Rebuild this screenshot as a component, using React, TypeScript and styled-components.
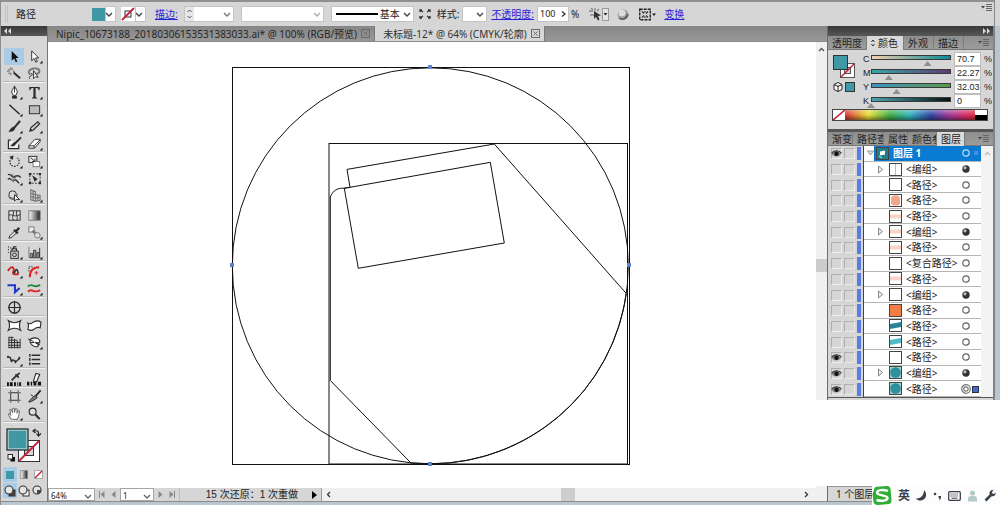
import React from 'react';
import styled, { createGlobalStyle, css } from 'styled-components';

const teal = '#3f98a3';
const cjk = '"Noto Sans", "Noto Sans CJK SC", sans-serif';
const narrow = '"Liberation Sans", "Noto Sans CJK SC", sans-serif';

const GlobalStyle = createGlobalStyle`
  * { box-sizing: border-box; }
  html, body { margin: 0; height: 100%; }
  body { font: 10px/14px ${cjk}; color: #222; background: #d6d6d6; overflow: hidden; }
  button, input, select { font: inherit; color: inherit; margin: 0; padding: 0; border: 0; background: none; border-radius: 0; outline: none; }
  svg { display: block; flex: none; }
`;

const Window = styled.div`
  position: relative;
  display: flex;
  flex-direction: column;
  height: 100vh;
  min-height: 500px;
  border-left: 1px solid #8c8c8c;
`;

/* ---------- options bar ---------- */
const OptionsBar = styled.header`
  display: flex;
  align-items: center;
  height: 26px;
  flex: none;
  margin-right: 5px;
  border-top: 2px solid #909090;
  border-right: 1px solid #8a8a8a;
  padding-left: 4px;
  background: #d6d6d6;
`;
const Grip = styled.span`
  width: 3px;
  height: 18px;
  border-left: 1px solid #c2c2c2;
  border-right: 1px solid #c2c2c2;
`;
const BarText = styled.span<{ $ml: number }>`
  margin-left: ${p => p.$ml}px;
  white-space: nowrap;
  flex: none;
`;
const BarLink = styled.a<{ $ml: number }>`
  margin-left: ${p => p.$ml}px;
  color: #2a22d8;
  text-decoration: underline;
  white-space: nowrap;
  flex: none;
`;
const Chip = styled.span<{ $ml: number; $color: string }>`
  width: 13px;
  height: 13px;
  flex: none;
  margin-left: ${p => p.$ml}px;
  background: ${p => p.$color};
`;
const Field = styled.span<{ $ml: number; $w: number }>`
  position: relative;
  display: flex;
  align-items: center;
  flex: none;
  width: ${p => p.$w}px;
  height: 16px;
  margin-left: ${p => p.$ml}px;
  background: #fff;
  border: 1px solid #c3c3c3;
`;
const FieldSelect = styled.select`
  appearance: none;
  width: 100%;
  height: 14px;
  line-height: 14px;
`;
const Arrow = styled.svg`
  position: absolute;
  right: 2px;
  top: 4px;
  pointer-events: none;
`;
const Spinner = styled.span`
  display: flex;
  width: 9px;
  height: 14px;
  flex: none;
  align-items: center;
  justify-content: center;
  background: #e6e6e6;
`;
const FieldInput = styled.input`
  width: 100%;
  min-width: 0;
  height: 14px;
  padding-left: 2px;
  font-size: 9px;
`;
const IconButton = styled.button<{ $ml: number }>`
  flex: none;
  margin-left: ${p => p.$ml}px;
  display: flex;
  align-items: center;
`;
const BarMenu = styled.button`
  margin-left: auto;
  align-self: flex-start;
  padding: 1px 1px 0 0;
`;

/* ---------- main areas ---------- */
const Body = styled.div`
  display: flex;
  flex: 1;
  min-height: 0;
  padding-bottom: 3px;
  background: #b9c6cf;
`;
const DarkHead = styled.div<{ $end?: boolean }>`
  display: flex;
  align-items: center;
  justify-content: ${p => (p.$end ? 'flex-end' : 'flex-start')};
  height: 10px;
  flex: none;
  padding: 0 3px;
  background: linear-gradient(#383838, #585858);
`;
const ToolColumn = styled.aside`
  display: flex;
  flex-direction: column;
  width: 47px;
  flex: none;
  background: #d6d6d6;
  border-right: 1px solid #777;
  border-bottom: 1px solid #8c8c8c;
`;
const ToolHandle = styled.div`
  height: 12px;
  flex: none;
`;
const ToolSection = styled.div<{ $pad: number }>`
  display: grid;
  grid-template-columns: 20px 20px;
  margin: 0 2px;
  padding: ${p => p.$pad}px 0 0 1px;
  border-bottom: 1px solid #f2f2f2;
  box-shadow: 0 -1px 0 #b9b9b9 inset;
`;
const ToolButton = styled.button<{ $on?: boolean }>`
  display: flex;
  align-items: center;
  justify-content: center;
  height: 17px;
  ${p => p.$on && css`background: #a9cbe6;`}
`;
const PaintArea = styled.div`
  padding: 5px 0 0 5px;
  height: 44px;
`;
const ModeRow = styled.div`
  display: flex;
  height: 16px;
  padding-left: 2px;
`;
const ModeButton = styled.button<{ $on?: boolean }>`
  display: flex;
  align-items: center;
  justify-content: center;
  width: 14px;
  height: 15px;
  background: ${p => (p.$on ? '#a9cbe6' : 'transparent')};
`;

const Center = styled.main`
  display: flex;
  flex-direction: column;
  flex: 1;
  min-width: 0;
  background: #fff;
`;
const TabBar = styled.nav`
  display: flex;
  height: 16px;
  flex: none;
  background: linear-gradient(#868686, #989898);
  border-bottom: 1px solid #8a8a8a;
`;
const DocTab = styled.div<{ $on?: boolean }>`
  display: flex;
  align-items: center;
  gap: 4px;
  height: 15px;
  padding: 0 4px 0 8px;
  background: ${p => (p.$on ? '#d6d6d6' : 'transparent')};
  border-right: 1px solid #787878;
  color: ${p => (p.$on ? '#333' : '#262626')};
`;
const DocName = styled.button`
  white-space: nowrap;
  text-align: left;
`;
const View = styled.div`
  display: flex;
  flex: 1;
  min-height: 0;
`;
const Artboard = styled.section`
  display: flex;
  flex: 1;
  min-width: 0;
  align-items: center;
  justify-content: center;
  overflow: hidden;
  background: #fff;
`;
const VScroll = styled.div`
  display: flex;
  flex-direction: column;
  align-items: center;
  width: 11px;
  flex: none;
  padding-top: 5px;
  background: #f0f0f0;
`;
const VThumb = styled.span`
  width: 11px;
  height: 13px;
  margin-top: 207px;
  background: #cdcdcd;
`;
const StatusBar = styled.footer`
  display: flex;
  height: 14px;
  flex: none;
  background: #d6d6d6;
  border-bottom: 1px solid #8c8c8c;
  font-size: 9px;
  line-height: 13px;
`;
const ZoomField = styled.span`
  position: relative;
  width: 47px;
  height: 13px;
  background: #fff;
  border: 1px solid #a5a5a5;
`;
const StatusSelect = styled.select`
  appearance: none;
  width: 100%;
  height: 11px;
  padding-left: 2px;
  font-size: 8px;
  line-height: 11px;
`;
const PageNav = styled.span`
  display: flex;
  align-items: center;
  justify-content: space-around;
  width: 25px;
`;
const PageField = styled(ZoomField)`
  width: 34px;
`;
const History = styled.span`
  display: flex;
  align-items: center;
  justify-content: flex-end;
  gap: 14px;
  width: 142px;
  padding-right: 4px;
  border-left: 1px solid #bdbdbd;
  font-family: ${narrow};
  font-size: 10px;
  white-space: nowrap;
`;
const HScroll = styled.div`
  display: flex;
  flex: 1;
  align-items: center;
  justify-content: space-between;
  padding: 0 18px 0 4px;
  background: #f0f0f0;
  border-left: 1px solid #999;
`;
const HThumb = styled.span`
  width: 14px;
  height: 13px;
  background: #cdcdcd;
`;

/* ---------- panels ---------- */
const PanelColumn = styled.aside`
  display: flex;
  flex-direction: column;
  width: 168px;
  flex: none;
  margin-right: 5px;
  background: #d6d6d6;
  border-left: 1px solid #6c6c6c;
  border-right: 2px solid #7f8487;
  border-bottom: 1px solid #8c8c8c;
`;
const PanelTabs = styled.div`
  display: flex;
  height: 14px;
  flex: none;
  background: linear-gradient(#8e8e8e, #9c9c9c);
  border-bottom: 1px solid #777;
`;
const PanelTab = styled.button<{ $w: number; $on?: boolean }>`
  display: flex;
  align-items: center;
  gap: 3px;
  width: ${p => p.$w}px;
  height: 14px;
  padding-left: 4px;
  overflow: hidden;
  white-space: nowrap;
  background: ${p => (p.$on ? '#dadada' : 'transparent')};
  border-right: 1px solid #7c7c7c;
`;
const PanelMenu = styled.button`
  margin-left: auto;
  padding-right: 3px;
`;
const ColorBody = styled.div`
  display: flex;
  gap: 7px;
  height: 59px;
  padding: 2px 3px 0 4px;
`;
const ChannelList = styled.div`
  display: flex;
  flex: 1;
  flex-direction: column;
`;
const Channel = styled.label`
  display: flex;
  align-items: center;
  height: 14px;
  font-family: ${narrow};
  font-size: 9px;
`;
const ChannelName = styled.span`
  width: 8px;
`;
const Track = styled.span<{ $from: string; $to: string }>`
  width: 80px;
  height: 5px;
  margin-bottom: 3px;
  background: linear-gradient(90deg, ${p => p.$from}, ${p => p.$to});
  border: 1px solid #3a3a3a;
`;
const Slider = styled.input`
  display: block;
  appearance: none;
  width: 88px;
  height: 9px;
  margin: 0 -5px;
  &::-webkit-slider-thumb {
    appearance: none;
    width: 8px;
    height: 5px;
    margin-top: 6px;
    background: #8f8f8f;
    clip-path: polygon(50% 0, 100% 100%, 0 100%);
  }
`;
const Amount = styled.input`
  width: 27px;
  height: 14px;
  margin: 0 3px 0 3px;
  padding-left: 2px;
  background: #fff;
  border: 1px solid #bdbdbd;
`;
const Spectrum = styled.div`
  display: flex;
  height: 12px;
  margin: 0 5px 0 4px;
  border: 1px solid #444;
  flex: none;
`;
const Hues = styled.span`
  flex: 1;
  background:
    linear-gradient(rgba(255, 255, 255, .35), transparent 50%, rgba(0, 0, 0, .45)),
    linear-gradient(90deg, #d8343c, #e8e03a 18%, #3fae49 35%, #35b5c0 50%, #3448a8 66%, #a03a9a 80%, #dc2f6a 93%, #d83040);
`;
const Ends = styled.span`
  width: 12px;
  background: linear-gradient(#fff 50%, #000 50%);
`;
const PanelGap = styled.div`
  height: 11px;
  flex: none;
  border-bottom: 3px solid #555;
`;
const LayerArea = styled.div`
  display: flex;
  height: 252px;
  flex: none;
  border-bottom: 1px solid #555;
`;
const LayerList = styled.ul`
  display: grid;
  grid-auto-rows: 1fr;
  flex: 1;
  margin: 0;
  padding: 0;
  list-style: none;
`;
const LayerRow = styled.li`
  display: flex;
  min-height: 0;
`;
const Flags = styled.span`
  display: flex;
  align-items: center;
  gap: 2px;
  width: 36px;
  padding-left: 3px;
  border-right: 1px solid #444;
`;
const Flag = styled.button`
  display: flex;
  align-items: center;
  justify-content: center;
  width: 11px;
  height: 11px;
  border: 1px solid;
  border-color: #b0b0b0 #ececec #ececec #b0b0b0;
`;
const Stripe = styled.span`
  width: 4px;
  height: 13px;
  background: #5b7be6;
`;
const Entry = styled.span<{ $top?: boolean }>`
  display: flex;
  align-items: center;
  flex: 1;
  padding-left: ${p => (p.$top ? 12 : 13)}px;
  border-bottom: 1px solid #b5b5b5;
  background: ${p => (p.$top ? 'linear-gradient(90deg, #fff 10px, #0a7bd3 10px)' : '#fff')};
  color: ${p => (p.$top ? '#fff' : '#222')};
  font-weight: ${p => (p.$top ? 700 : 400)};
`;
const Twist = styled.span`
  width: 12px;
  flex: none;
`;
const TopTwist = styled.span`
  width: 12px;
  margin-left: -12px;
  padding-left: 3px;
  flex: none;
`;
const Label = styled.span`
  flex: 1;
  margin-left: 4px;
  white-space: nowrap;
`;
const Target = styled.button`
  display: flex;
  align-items: center;
  width: 20px;
  height: 12px;
  flex: none;
`;
const LayerScroll = styled.span`
  display: flex;
  justify-content: center;
  width: 12px;
  padding-top: 5px;
  background: #f3f3f3;
`;
const PanelFooter = styled.div`
  margin-top: auto;
  height: 15px;
  flex: none;
  padding-left: 8px;
  border-top: 1px solid #999;
`;

/* ---------- overlays ---------- */
const Blank = styled.div`
  position: absolute;
  right: 0;
  bottom: 19px;
  width: 185px;
  height: 86px;
  background: #fff;
`;
const ImeBar = styled.div`
  position: absolute;
  right: 0;
  bottom: 0;
  display: flex;
  align-items: center;
  justify-content: space-between;
  width: 128px;
  height: 19px;
  padding-right: 4px;
  background: #fdfdfd;
  color: #3a3f4c;
`;
const ImeButton = styled.button`
  font-size: 12px;
  font-weight: 700;
  line-height: 16px;
`;

/* ---------- small drawings ---------- */
const Chevron = ({ color = '#444' }: { color?: string }) => (
  <Arrow width="8" height="7" viewBox="0 0 8 7" fill="none" stroke={color} strokeWidth="1.4"><path d="M1 2l3 3 3-3" /></Arrow>
);
const MenuGlyph = () => (
  <svg width="12" height="9" viewBox="0 0 12 9"><path d="M0 3h4L2 5.500z" fill="#444" /><path d="M5 1.500h6M5 3.500h6M5 5.500h6M5 7.500h6" stroke="#666" strokeWidth="1" /></svg>
);
const CloseGlyph = () => (
  <svg width="9" height="9" viewBox="0 0 9 9" fill="none" stroke="#6a6a6a"><rect x=".5" y=".5" width="8" height="8" /><path d="M2.500 2.500l4 4M6.500 2.500l-4 4" /></svg>
);
const NoneSwatch = ({ size = 14 }: { size?: number }) => (
  <svg width={size} height={size} viewBox="0 0 14 14"><rect width="14" height="14" fill="#fff" /><rect x="4" y="4" width="6" height="6" fill="none" stroke="#333" /><path d="M1 13L13 1" stroke="#c4203a" strokeWidth="1.800" /></svg>
);
const Eye = () => (
  <svg width="11" height="9" viewBox="0 0 11 9"><path d="M.5 5C2.500 1.500 8 1 10.500 4.500 8.500 8 3 8.500.5 5z" fill="#888" /><path d="M.5 4.500C2.500 1 8 .8 10.500 4" stroke="#333" fill="none" strokeWidth="1.200" /><circle cx="5.500" cy="4.800" r="2.200" fill="#111" /></svg>
);
const Dot = ({ full, ring }: { full?: boolean; ring?: boolean }) => (
  <svg width="10" height="10" viewBox="0 0 10 10">
    {full ? (<><circle cx="5" cy="5" r="3.700" fill="#333" /><circle cx="4" cy="3.800" r="1.600" fill="#bbb" /></>)
      : ring ? (<><circle cx="5" cy="5" r="4.300" fill="none" stroke="#777" strokeWidth="1.200" /><circle cx="5" cy="5" r="2.200" fill="#fff" stroke="#777" strokeWidth="1.200" /></>)
        : (<circle cx="5" cy="5" r="3.200" fill="none" stroke="#666" strokeWidth="1.200" />)}
  </svg>
);

const k = '#2b2b2b';
const g = '#777';
const icons: Record<string, React.ReactNode> = {
  select: <path d="M6 2v10.500l2.600-2.400 1.800 4 1.600-.7-1.800-3.900h3.300z" fill="#111" />,
  direct: <path d="M6 2v10.500l2.600-2.400 1.800 4 1.600-.7-1.800-3.900h3.300z" fill="#fff" stroke={k} />,
  wand: <><path d="M8 7l7 6" stroke={k} strokeWidth="2" /><path d="M5 1v3M5 7v3M1 5.500h3M7 5.500h2M2.500 3l1.500 1.300M7 2.500L6 4M2.500 8.500L4 7" stroke={g} strokeWidth="1.200" /></>,
  lasso: <><path d="M5 9C1 7 3 3 9 2.500c6-.3 7 4.500 2.500 6L7 9" stroke={g} strokeWidth="2" /><path d="M5 8c2 0 2 2 0 2.500S3 13 4.500 14M8 5v8.500l2-2 3 .5z" stroke={k} fill="#fff" /></>,
  pen: <><path d="M9 1c1 3 3 4 3 6.500L10.500 11h-3L6 7.500C6 5 8 4 9 1z" fill="#fff" stroke={k} /><path d="M9 2v6" stroke={k} /><rect x="6.500" y="11.500" width="5" height="3" fill={k} /></>,
  type: <path d="M3.500 2h11v3.500h-1C13 3.800 12.500 3.300 10.200 3.300v9c0 .9.400 1.100 1.600 1.200v.8H6.200v-.8c1.200-.1 1.600-.3 1.600-1.200v-9C5.500 3.300 5 3.800 4.500 5.500h-1z" fill={k} />,
  line: <path d="M3.500 3l11 10" stroke={k} strokeWidth="1.600" />,
  rect: <rect x="3.500" y="4" width="11" height="8.500" fill="#bbb" stroke={k} />,
  brush: <><path d="M15 2L9 9" stroke={k} strokeWidth="2.200" /><path d="M8.500 8c2 1 1.500 3-.5 4.500-1.500 1-4 1.300-5.500 1C4 12.500 5 9 8.500 8z" fill={k} /></>,
  pencil: <><path d="M4 13l1-3.500L12.500 3l2 2L7.500 12z" fill="#ccc" stroke={k} strokeWidth="1.200" /><path d="M4 13l3-1-2-2z" fill={k} /></>,
  blob: <><path d="M5 4.500H2.500v9h11V9" fill="#eee" stroke={k} strokeWidth="1.300" /><path d="M16 1.500L9.500 8" stroke={k} strokeWidth="2" /><path d="M9.500 6.500c2 1 1 3-.5 3.800-1.500.7-3.500.7-4.500.4C6 10 7 7 9.500 6.500z" fill={k} /></>,
  eraser: <><path d="M3 10.500L9.500 3.500h5.500v2.500L9 13H3z" fill="#fff" stroke={k} /><path d="M3 10.500h5.500L15 4M8.500 10.500V13" stroke={k} /></>,
  rotate: <><path d="M6 4.200a5 5 0 1 0 6 0" stroke={k} strokeWidth="1.300" strokeDasharray="1.600 1.300" /><path d="M8 1.500L3.500 3l3.500 3.500z" fill={k} /></>,
  scale: <><rect x="3" y="2.500" width="8.500" height="6.500" fill="#eee" stroke={k} /><rect x="7.500" y="8" width="7" height="5.500" fill="#fff" stroke={g} /><path d="M5 4l4.500 4M9.500 5v3h-3" stroke={k} /></>,
  warp: <><path d="M2 4c3-2 4 3 6 2.500S13 3 15.500 7M2 9c2-3 5 3 7 1s3 2 5 3" stroke={k} strokeWidth="1.500" /><path d="M7 3l1 8M11 5l-3 6M4 7l4 5" stroke={g} /></>,
  free: <><rect x="4" y="3" width="11" height="10" stroke={k} strokeDasharray="2 1.500" /><path d="M3 2h2.500v2.500H3zM13.500 2H16v2.500h-2.500zM3 11.500h2.500V14H3zM13.500 11.500H16V14h-2.500zM6.500 4.500l6 4-3.500 3z" fill={k} /></>,
  shape: <><circle cx="7" cy="7" r="4" fill="#ddd" stroke={k} /><path d="M3 8c0 4 5 5 8 3l1-5" stroke={g} strokeWidth="1.400" /><path d="M9 7v7l2-2 3.500.5z" fill="#fff" stroke={k} /></>,
  persp: <><path d="M5 2l5 2v10l-5-1.500zM10 7l5 1v5l-5 1M5 5.500l5 1.500M5 9l5 1.500M7.500 3v10M10 10.500l5-.5M12.500 7.500v6" fill="none" stroke={g} strokeWidth="1.200" /></>,
  mesh: <><rect x="3" y="3" width="12" height="10" fill="#ddd" stroke={k} /><path d="M3 8c3-3 4 3 12-1M7 3c3 3-2 6 1 10M11.500 3c-2 4 2 6 0 10" stroke={k} /></>,
  gradient: <><defs><linearGradient id="gt"><stop offset="0" stopColor="#fff" /><stop offset="1" stopColor="#222" /></linearGradient></defs><rect x="3" y="3" width="12" height="10" fill="url(#gt)" stroke={g} /></>,
  dropper: <><path d="M3 14l1-2.500L9.500 6l2 2L6 13.500z" fill="#ddd" stroke={k} /><path d="M8.500 5l4 4M11 6.500L14 3" stroke={k} strokeWidth="2.400" /></>,
  blend: <><rect x="3" y="2" width="5.500" height="5.500" fill="#eee" stroke={g} /><path d="M7 6l4 4" stroke={g} strokeWidth="3" /><circle cx="12" cy="11" r="3" fill="#ddd" stroke={g} /></>,
  spray: <><rect x="5" y="6.500" width="8" height="8" fill="#ccc" stroke={k} /><path d="M6.500 6.500V4h4.500v2.500M8 4V2h3M2 2h1M4.500 3h1M2 5h1M2 8h1" stroke={k} strokeWidth="1.300" /><circle cx="9" cy="10.500" r="2" stroke={k} /></>,
  graph: <><path d="M3 2v11.500h13" stroke={g} /><path d="M4.500 9h2.500v4.500H4.500zM8 5.500h2.500v8H8zM11.500 8H14v5.500h-2.500z" fill="#999" stroke={k} strokeWidth=".8" /><path d="M14.500 3v10" stroke={k} /></>,
  reform: <><path d="M2 7.500c2-4 4.500-5 6-3 1 1.500-1 4-.5 5.500s4 1.500 6 0" stroke="#c22" strokeWidth="2" /><path d="M9 10c0-3 2-5 3-3.500l1 3.500" stroke={k} strokeWidth="1.600" /></>,
  corner: <><path d="M4 14C4 7 7 3.500 14 3.500" stroke="#d22" strokeWidth="2" /><path d="M3 8V3h5" stroke={k} strokeDasharray="1.500 1" /><path d="M11 7.500v4M9 9.500h4" stroke="#d22" /></>,
  zig: <path d="M1.500 4.500H9.500v7.500L14.500 7.500" stroke="#2036c8" strokeWidth="2.200" />,
  waves: <><path d="M2 6c4-5 7 3 13-2" stroke="#1f8a3a" strokeWidth="2" /><path d="M2 11.500c4-5 7 3 13-2" stroke="#d22" strokeWidth="2" /></>,
  target: <><circle cx="9" cy="8" r="6" stroke={k} strokeWidth="1.400" /><path d="M9 1v14M2 8h14" stroke={k} strokeWidth="1.300" /></>,
  bow: <path d="M2.500 3c4 2.500 9 2.500 13 0-1.500 3-1.500 7 0 10-4-2.500-9-2.500-13 0 1.500-3 1.500-7 0-10z" fill="#fff" stroke={k} strokeWidth="1.200" />,
  flag: <path d="M2 5.500c3 2 4.500-.5 6.500-1.500s5-1.500 7.500.5L15 10.500c-3-1.500-4.500 0-6.500 1.500S4 13.500 2 12c1-2 1-4 0-6.500z" fill="#fff" stroke={k} strokeWidth="1.200" />,
  grid: <><path d="M3 2v12M6 2v12M9 4v10M12 6v8M15 4v10M3 2.500h5M3 5.500h9M3 8h12M3 11h12M3 13.500h12" stroke={k} /></>,
  liquify: <><path d="M4 5c3-3 9-2 10 0 2 3-1 4-3 3-2-1 0 2 3 2l-2 2.500C8 13 4 10 4 5z" fill="#fff" stroke={k} strokeWidth="1.200" /><path d="M2 4l6 3M5 8h4" stroke={k} /></>,
  crystal: <><path d="M1.500 5l3 1 1 3.500 2.500-1 2 2 2-1.500 3-3" stroke={k} strokeWidth="1.500" /><path d="M2 4v2.500M6 8v3M10 9v3M14 5v3" stroke={k} strokeWidth="1.500" /></>,
  width: <path d="M6 3.500h9M6 8h9M6 12.500h9M4 2v3M4 6.500v3M4 11v3" stroke={k} strokeWidth="1.500" />,
  pick: <><path d="M6 10l5-5M10 3.500l3.500 3.500M12 4.500L14.500 2" stroke={k} strokeWidth="1.800" /><path d="M1 14h2M4 14h3M8.500 14h2M12 14h1M14 14h2" stroke="#111" strokeWidth="4" /></>,
  ink: <><path d="M8 10.500L10.500 2.500l4 1-3 7.500-3.500 1z" fill="#fff" stroke={k} strokeWidth="1.200" /><path d="M1 13.500h2.500M5 13.500h1.500M8 13.500h3M12.500 13.500H16" stroke="#111" strokeWidth="4" /></>,
  artboard: <><rect x="5" y="4" width="8" height="8" stroke={k} /><path d="M5 1.500V3M13 1.500V3M2.500 4H4M14 4h1.500M2.500 12H4M14 12h1.500M5 13v1.500M13 13v1.500" stroke={k} /></>,
  slice: <><path d="M15.500 1.500L9 9" stroke={k} strokeWidth="2" /><path d="M3 14c0-2 5-6 7-7l2 2c-1 1-6 5-9 5z" fill={g} stroke={k} /><path d="M5 6l3 2" stroke={k} /></>,
  hand: <path d="M5.500 14C4 12 2.500 9.500 2.500 8.500c1-1 2 .5 2.500 1L4 4c1-1 1.700 0 2 .8L7 7.500V3c1-1 1.700-.6 2 0v4l1-4c1-.7 1.700 0 1.700.8L11.500 8l1.500-3c1-.2 1.500.4 1.300 1.200L13 12l-1 2.500z" fill="#fff" stroke={g} strokeWidth="1.100" />,
  zoom: <><circle cx="7" cy="6" r="3.700" fill="#ddd" stroke={k} strokeWidth="1.200" /><path d="M10 9l4.500 5" stroke={k} strokeWidth="2.200" /></>,
};
const Tool = ({ name, on }: { name: string; on?: boolean }) => {
  const fly = !['select', 'wand', 'lasso', 'blob', 'free', 'mesh', 'gradient', 'dropper', 'target', 'bow', 'flag', 'grid', 'width', 'pick', 'ink', 'artboard', 'zoom'].includes(name);
  return (
    <ToolButton $on={on} aria-label={name}>
      <svg width="17" height="15" viewBox="0 0 18 16" fill="none">{icons[name]}{fly && <path d="M17.500 12.500v3h-3z" fill="#111" />}</svg>
    </ToolButton>
  );
};

const toolSections: { pad: number; tools: string[] }[] = [
  { pad: 0, tools: ['select', 'direct', 'wand', 'lasso'] },
  { pad: 1, tools: ['pen', 'type', 'line', 'rect', 'brush', 'pencil', 'blob', 'eraser'] },
  { pad: 0, tools: ['rotate', 'scale', 'warp', 'free', 'shape', 'persp'] },
  { pad: 2, tools: ['mesh', 'gradient', 'dropper', 'blend'] },
  { pad: 2, tools: ['spray', 'graph'] },
  { pad: 1, tools: ['reform', 'corner', 'zig', 'waves'] },
  { pad: 1, tools: ['target'] },
  { pad: 0, tools: ['bow', 'flag', 'grid', 'liquify', 'crystal', 'width'] },
  { pad: 1, tools: ['pick', 'ink'] },
  { pad: 0, tools: ['artboard', 'slice', 'hand', 'zoom'] },
];

const channels = [
  { name: 'C', value: 70.7, from: '#f3d0ae', to: '#0a8a96' },
  { name: 'M', value: 22.27, from: '#35a8a8', to: '#5d3b72' },
  { name: 'Y', value: 32.03, from: '#3d93c0', to: '#5a9a4c' },
  { name: 'K', value: 0, from: '#4aa5ad', to: '#061014' },
];

type Art = 'blank' | 'line' | 'pink' | 'band' | 'orange' | 'steel' | 'aqua' | 'disc' | 'top';
const Thumb = ({ art }: { art: Art }) => (
  <svg width="13" height="13" viewBox="0 0 13 13">
    <rect x=".5" y=".5" width="12" height="12" fill="#fff" stroke="#444" />
    {art === 'line' && <path d="M6.500 1v11" stroke="#eca995" />}
    {art === 'pink' && <path d="M2 3.500L4 1.500h5l2 2v6l-2 2H4l-2-2z" fill="#f4a68c" />}
    {art === 'band' && <path d="M1 4.500h11v4H1z" fill="#f9d3c6" />}
    {art === 'orange' && <path d="M1 1h11v11H1z" fill="#f47c45" />}
    {art === 'steel' && <path d="M1 5l11-2v5L1 10z" fill="#2d8199" />}
    {art === 'aqua' && <path d="M1 5l11-2v5L1 10z" fill="#4fbcc8" />}
    {art === 'disc' && <><rect x="1" y="1" width="11" height="11" fill="#9fcdd2" /><circle cx="6.500" cy="6.500" r="5.300" fill="#2c9199" /></>}
    {art === 'top' && <><rect x="1" y="1" width="11" height="11" fill="#1d7f8c" /><path d="M4 4.500l5-1v4l-5 1z" fill="#fff" /><path d="M3 9l3 2" stroke="#9fe" /></>}
  </svg>
);

const layers: { label: string; art: Art; group?: boolean; eye?: boolean; picked?: boolean }[] = [
  { label: '<编组>', art: 'line', group: true },
  { label: '<路径>', art: 'blank' },
  { label: '<路径>', art: 'pink' },
  { label: '<路径>', art: 'band' },
  { label: '<编组>', art: 'band', group: true },
  { label: '<路径>', art: 'band' },
  { label: '<复合路径>', art: 'blank' },
  { label: '<路径>', art: 'band' },
  { label: '<编组>', art: 'blank', group: true },
  { label: '<路径>', art: 'orange' },
  { label: '<路径>', art: 'steel' },
  { label: '<路径>', art: 'aqua' },
  { label: '<路径>', art: 'blank', eye: true },
  { label: '<编组>', art: 'disc', group: true, eye: true },
  { label: '<路径>', art: 'disc', eye: true, picked: true },
];

const LayerFlags = ({ eye }: { eye?: boolean }) => (
  <Flags>
    <Flag aria-label="可视性">{eye && <Eye />}</Flag>
    <Flag aria-label="锁定" />
    <Stripe />
  </Flags>
);

const Nav = ({ d }: { d: string }) => (
  <button aria-label="翻页"><svg width="7" height="7" viewBox="0 0 7 7"><path d={d} fill="#888" /></svg></button>
);

const Drawing = () => (
  <svg width="401" height="400" viewBox="232 65 401 400" overflow="visible" fill="none" stroke="#111" strokeWidth="1">
    <rect x="232.500" y="67.500" width="397" height="397" />
    <rect x="329" y="143.500" width="298.500" height="320.500" />
    <circle cx="430.300" cy="265.800" r="198" />
    <path d="M494.300 144L626.300 293.500A198 198 0 0 1 430.300 463.800L411 463L330.300 380.500V197C333 190 338 188 344 188.200L350 187.300L347 169.400Z" />
    <path d="M344.300 188.300L490.300 162.300L504.300 243L358.300 268.300Z" />
    <g fill="#5b83d0" stroke="none">
      <rect x="428" y="65" width="4" height="4" /><rect x="230" y="263" width="4" height="4" />
      <rect x="627" y="263" width="4" height="4" /><rect x="428" y="462" width="4" height="4" />
    </g>
  </svg>
);

export default function App() {
  return (
    <Window>
      <GlobalStyle />
      <OptionsBar>
        <Grip />
        <BarText $ml={8}>路径</BarText>
        <Chip $ml={56} $color={teal} />
        <Field $ml={0} $w={11}><FieldSelect aria-label="填色" /><Chevron /></Field>
        <IconButton $ml={5} aria-label="无描边"><NoneSwatch /></IconButton>
        <Field $ml={0} $w={11}><FieldSelect aria-label="描边颜色" /><Chevron /></Field>
        <BarLink $ml={9} href="#stroke">描边:</BarLink>
        <Field $ml={6} $w={50}>
          <Spinner><svg width="7" height="12" viewBox="0 0 7 12" fill="none" stroke="#555"><path d="M1.500 4l2-2 2 2M1.500 8l2 2 2-2" /></svg></Spinner>
          <FieldSelect aria-label="描边粗细" /><Chevron color="#777" />
        </Field>
        <Field $ml={7} $w={83}><FieldSelect aria-label="变量宽度" /><Chevron color="#aaa" /></Field>
        <Field $ml={7} $w={83}>
          <svg width="48" height="4" viewBox="0 0 48 4"><path d="M4 2h42" stroke="#000" strokeWidth="2" /></svg>
          <FieldSelect aria-label="画笔"><option>基本</option></FieldSelect><Chevron />
        </Field>
        <IconButton $ml={5} aria-label="画笔选项">
          <svg width="12" height="12" viewBox="0 0 12 12" stroke="#333" strokeWidth="1.300" fill="none"><path d="M1 2l3 2M1 10l3-2M11 2L8 4M11 10L8 8M1 4V2h2M9 2h2v2M1 8v2h2M9 10h2V8" /></svg>
        </IconButton>
        <BarText $ml={6}>样式:</BarText>
        <Field $ml={3} $w={25}><FieldSelect aria-label="图形样式" /><Chevron /></Field>
        <BarLink $ml={4} href="#opacity">不透明度:</BarLink>
        <Field $ml={3} $w={32}><FieldInput aria-label="不透明度" defaultValue="100" />
          <svg width="8" height="8" viewBox="0 0 8 8" fill="none" stroke="#333" strokeWidth="1.300"><path d="M2 1.500L5 4 2 6.500" /></svg>
        </Field>
        <BarText $ml={2}>%</BarText>
        <IconButton $ml={9} aria-label="选择类似对象">
          <svg width="22" height="15" viewBox="0 0 22 15"><path d="M1 4h4M2 8h4M7 1v3M3 1l2 2M11 2L9 4" stroke="#888" strokeWidth="1.300" /><path d="M6 4v8l2-2 2 3.500 1.500-1L10 9l3-.5z" fill="#333" /><rect x="14.500" y="1.500" width="6" height="12" fill="#e4e4e4" stroke="#999" /><path d="M15.500 6h4l-2 2.500z" fill="#222" /></svg>
        </IconButton>
        <IconButton $ml={7} aria-label="重新着色">
          <svg width="12" height="13" viewBox="0 0 12 13"><circle cx="6" cy="6.500" r="5.300" fill="#999" /><circle cx="5" cy="5" r="3.500" fill="#ddd" /><path d="M2 10c3 2.500 8 1 9-4" stroke="#555" fill="none" strokeWidth="1.400" /></svg>
        </IconButton>
        <IconButton $ml={10} aria-label="对齐">
          <svg width="18" height="13" viewBox="0 0 18 13"><rect x=".7" y="1.200" width="10.600" height="10.600" fill="none" stroke="#222" strokeWidth="1.400" strokeDasharray="3 1" /><path d="M3 3.500l2 2M9 3.500l-2 2M3 9.500l2-2M9 9.500l-2-2M6 3v1.500M6 8.500V10" stroke="#333" strokeWidth="1.300" /><path d="M13 5.500h4L15 8z" fill="#222" /></svg>
        </IconButton>
        <BarLink $ml={7} href="#transform">变换</BarLink>
        <BarMenu aria-label="菜单"><MenuGlyph /></BarMenu>
      </OptionsBar>

      <Body>
        <ToolColumn>
          <DarkHead><svg width="7" height="6" viewBox="0 0 7 6"><path d="M3 0v6L0 3zM7 0v6L4 3z" fill="#ddd" /></svg></DarkHead>
          <ToolHandle />
          {toolSections.map((s, i) => (
            <ToolSection key={i} $pad={s.pad}>
              {s.tools.map(t => <Tool key={t} name={t} on={t === 'select'} />)}
            </ToolSection>
          ))}
          <PaintArea>
            <svg width="36" height="36" viewBox="0 0 36 36">
              <rect x="12.500" y="12.500" width="21" height="21" fill="#fff" stroke="#333" />
              <rect x="18.500" y="18.500" width="9" height="9" fill="#d6d6d6" stroke="#333" />
              <path d="M13 33L33 13" stroke="#c4203a" strokeWidth="1.800" />
              <rect x="1" y="1" width="21" height="21" fill={teal} stroke="#222" strokeWidth="1.200" />
              <rect x="2.200" y="2.200" width="18.600" height="18.600" fill="none" stroke="#c9dfe2" strokeWidth=".8" />
              <path d="M28 3c4-1 5 1 4.500 4M29.500 1L27 3l2.500 2M30.500 5.500l2 2.500L35 5.500" fill="none" stroke={k} strokeWidth="1.200" />
              <rect x="4.500" y="29" width="4.500" height="4.500" fill="#111" /><rect x="2" y="26.500" width="4.500" height="4.500" fill="#fff" stroke={k} />
            </svg>
          </PaintArea>
          <ModeRow>
            <ModeButton $on aria-label="颜色"><svg width="8" height="8"><rect width="8" height="8" fill={teal} /></svg></ModeButton>
            <ModeButton aria-label="渐变"><svg width="8" height="9" viewBox="0 0 8 9"><rect x=".5" y=".5" width="7" height="8" fill="url(#gt)" stroke="#888" strokeWidth=".7" /></svg></ModeButton>
            <ModeButton aria-label="无"><svg width="9" height="9" viewBox="0 0 9 9"><rect x=".5" y=".5" width="8" height="8" fill="#fff" stroke="#aaa" /><path d="M1 8l7-7" stroke="#c4203a" strokeWidth="1.500" /></svg></ModeButton>
          </ModeRow>
          <ModeRow>
            {[0, 1, 2].map(i => (
              <ModeButton key={i} $on={i === 0} aria-label="绘图模式">
                <svg width="12" height="12" viewBox="0 0 12 12">
                  {i < 2 && <rect x="5" y="5" width="6" height="6" fill={i ? '#fff' : '#444'} stroke="#333" />}
                  <circle cx="5" cy="5" r="4" fill="#e4e4e4" stroke="#333" strokeWidth="1.100" />
                  {i === 2 && <path d="M5 5h4a4 4 0 0 1-4 4z" fill="#444" />}
                </svg>
              </ModeButton>
            ))}
          </ModeRow>
        </ToolColumn>

        <Center>
          <TabBar>
            <DocTab><DocName>Nipic_10673188_20180306153531383033.ai* @ 100% (RGB/预览)</DocName><button aria-label="关闭"><CloseGlyph /></button></DocTab>
            <DocTab $on><DocName>未标题-12* @ 64% (CMYK/轮廓)</DocName><button aria-label="关闭"><CloseGlyph /></button></DocTab>
          </TabBar>
          <View>
            <Artboard><Drawing /></Artboard>
            <VScroll>
              <svg width="7" height="5" viewBox="0 0 7 5" fill="none" stroke="#555" strokeWidth="1.400"><path d="M1 4l2.500-2.500L6 4" /></svg>
              <VThumb />
            </VScroll>
          </View>
          <StatusBar>
            <ZoomField><StatusSelect aria-label="缩放"><option>64%</option></StatusSelect><Chevron color="#666" /></ZoomField>
            <PageNav><Nav d="M1 0v7h1V0zM6.500 0v7L2.500 3.500z" /><Nav d="M5.500 0v7L1.500 3.500z" /></PageNav>
            <PageField><StatusSelect aria-label="画板"><option>1</option></StatusSelect><Chevron color="#666" /></PageField>
            <PageNav><Nav d="M1.500 0v7l4-3.500z" /><Nav d="M.5 0v7l4-3.500zM5 0v7h1V0z" /></PageNav>
            <History>15 次还原：1 次重做<svg width="5" height="8" viewBox="0 0 5 8"><path d="M0 0v8l5-4z" /></svg></History>
            <HScroll>
              <svg width="5" height="7" viewBox="0 0 5 7" fill="none" stroke="#333" strokeWidth="1.300"><path d="M4 1L1.500 3.500 4 6" /></svg>
              <HThumb />
              <svg width="5" height="7" viewBox="0 0 5 7" fill="none" stroke="#333" strokeWidth="1.300"><path d="M1 1l2.500 2.500L1 6" /></svg>
            </HScroll>
          </StatusBar>
        </Center>

        <PanelColumn>
          <DarkHead $end><svg width="7" height="6" viewBox="0 0 7 6"><path d="M0 0v6l3-3zM4 0v6l3-3z" fill="#ddd" /></svg></DarkHead>
          <PanelTabs>
            <PanelTab $w={39}>透明度</PanelTab>
            <PanelTab $w={37} $on><svg width="4" height="8" viewBox="0 0 4 8" fill="none" stroke="#333"><path d="M.5 3L2 1l1.500 2M.5 5L2 7l1.500-2" /></svg>颜色</PanelTab>
            <PanelTab $w={30}>外观</PanelTab>
            <PanelTab $w={30}>描边</PanelTab>
            <PanelMenu aria-label="菜单"><MenuGlyph /></PanelMenu>
          </PanelTabs>
          <ColorBody>
            <svg width="24" height="42" viewBox="0 0 24 42">
              <rect x="8.500" y="11.500" width="14" height="14" fill="#fff" stroke="#555" />
              <rect x="12.500" y="15.500" width="6" height="6" fill="#d6d6d6" stroke="#555" />
              <path d="M9 25L22 12" stroke="#c4203a" strokeWidth="1.500" />
              <rect x="1.500" y="3.500" width="14" height="14" fill={teal} stroke="#333" />
              <path d="M2 32.500L6 30.500l4 2v5L6 39.500l-4-2zM2 32.500l4 2 4-2M6 34.500v5" fill="#fff" stroke="#222" />
              <rect x="13.500" y="30.500" width="9" height="9" fill={teal} stroke="#333" />
            </svg>
            <ChannelList>
              {channels.map(c => (
                <Channel key={c.name}>
                  <ChannelName>{c.name}</ChannelName>
                  <Track $from={c.from} $to={c.to}><Slider type="range" min="0" max="100" step="0.01" defaultValue={c.value} aria-label={c.name} /></Track>
                  <Amount defaultValue={c.value} aria-label={c.name + ' 值'} />%
                </Channel>
              ))}
            </ChannelList>
          </ColorBody>
          <Spectrum>
            <svg width="12" height="10" viewBox="0 0 12 10"><rect width="12" height="10" fill="#fff" /><path d="M0 10L12 0" stroke="#c4203a" strokeWidth="1.600" /></svg>
            <Hues /><Ends />
          </Spectrum>
          <PanelGap />
          <PanelTabs>
            <PanelTab $w={25}>渐变</PanelTab>
            <PanelTab $w={31}>路径查</PanelTab>
            <PanelTab $w={24}>属性</PanelTab>
            <PanelTab $w={29}>颜色参</PanelTab>
            <PanelTab $w={28} $on>图层</PanelTab>
            <PanelMenu aria-label="菜单"><MenuGlyph /></PanelMenu>
          </PanelTabs>
          <LayerArea>
            <LayerList>
              <LayerRow>
                <LayerFlags eye />
                <Entry $top>
                  <TopTwist><svg width="7" height="6" viewBox="0 0 7 6"><path d="M.5 1h6l-3 4z" fill="#ddd" stroke="#999" /></svg></TopTwist>
                  <Thumb art="top" /><Label>图层 1</Label>
                  <Target aria-label="定位"><svg width="18" height="10" viewBox="0 0 18 10"><circle cx="5" cy="5" r="3.200" fill="none" stroke="#b9dcf5" strokeWidth="1.200" /><rect x="13" y="3" width="4" height="4" fill="#4a8fe6" /></svg></Target>
                </Entry>
              </LayerRow>
              {layers.map((l, i) => (
                <LayerRow key={i}>
                  <LayerFlags eye={l.eye} />
                  <Entry>
                    <Twist>{l.group && <svg width="7" height="9" viewBox="0 0 7 9"><path d="M1.500 1v7l4-3.500z" fill="#eee" stroke="#888" /></svg>}</Twist>
                    <Thumb art={l.art} /><Label>{l.label}</Label>
                    <Target aria-label="定位"><Dot full={l.group} ring={l.picked} />{l.picked && <svg width="8" height="8" viewBox="0 0 8 8"><rect x="1.500" y="1.500" width="6" height="6" fill="#4668d0" stroke="#234" /></svg>}</Target>
                  </Entry>
                </LayerRow>
              ))}
            </LayerList>
            <LayerScroll><svg width="7" height="5" viewBox="0 0 7 5" fill="none" stroke="#bbb" strokeWidth="1.300"><path d="M1 4l2.500-2.500L6 4" /></svg></LayerScroll>
          </LayerArea>
          <PanelFooter>1 个图层</PanelFooter>
        </PanelColumn>
      </Body>

      <Blank />
      <ImeBar>
        <svg width="20" height="19" viewBox="0 0 20 19"><path d="M2 4Q2 1 5 .8L15 0Q18 0 18.500 3L19.500 14Q19.500 17.500 17 18L6 19Q2 19 1.500 16L.5 8z" fill="#2fae35" /><path d="M16 5C11 3 5 4 5 6.800c0 3.200 10.500 2 10.500 5.200 0 2.800-6 3.500-11 2" fill="none" stroke="#fff" strokeWidth="2.400" /></svg>
        <ImeButton>英</ImeButton>
        <svg width="11" height="11" viewBox="0 0 11 11"><path d="M8 0c4 4 2 10-3 10.500C3 10.700 1 10 0 8.500 5 9 8 5 8 0z" fill="#3a3f4c" /></svg>
        <svg width="9" height="10" viewBox="0 0 9 10"><circle cx="2" cy="3" r="1.300" fill="#3a3f4c" /><path d="M5.500 5h2.500c.3 2-.5 3.500-2 4.500.5-1 .7-1.500.3-2.200-.8-.3-.8-1.300-.8-2.300z" fill="#3a3f4c" /></svg>
        <svg width="13" height="10" viewBox="0 0 13 10"><rect x=".7" y=".7" width="11.600" height="8.600" rx="1" fill="none" stroke="#3a3f4c" strokeWidth="1.300" /><path d="M2.500 3h8M2.500 5h8" stroke="#3a3f4c" strokeDasharray="1.200 .8" strokeWidth="1.200" /><path d="M3.500 7.200h6" stroke="#3a3f4c" /></svg>
        <svg width="11" height="12" viewBox="0 0 11 12"><circle cx="5.500" cy="3" r="2.600" fill="#b4cdc9" /><path d="M1 11.500V9q0-3 3-3h3q3 0 3 3v2.500z" fill="#b4cdc9" /></svg>
        <svg width="12" height="13" viewBox="0 0 12 13"><path d="M1.500 11.500L7 6" stroke="#3a3f4c" strokeWidth="2.600" /><path d="M9.500 1C7 .5 5 2.500 5.500 5L7.500 7c2.500.8 4.500-1 4-3.500L9.500 5.200 7.700 3.500z" fill="#3a3f4c" /></svg>
      </ImeBar>
    </Window>
  );
}
